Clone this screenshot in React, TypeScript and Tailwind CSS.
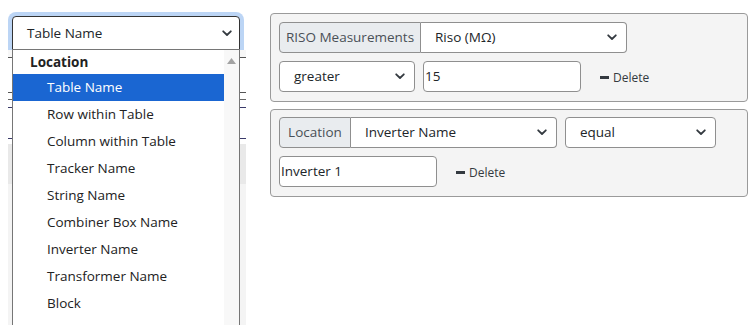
import React from "react";

const Chevron = ({ className = "" }: { className?: string }) => (
  <svg width="10" height="7" viewBox="0 0 10 7" className={className}>
    <path d="M1.2 1.3 L5 5 L8.8 1.3" fill="none" stroke="#343a40" strokeWidth="1.8" strokeLinecap="round" strokeLinejoin="round" />
  </svg>
);

const Select = ({ text, className = "" }: { text: string; className?: string }) => (
  <div className={`flex items-center justify-between bg-white border border-[#8f8f8f] pl-[14px] pr-[9px] text-[13.5px] text-[#212529] ${className}`}>
    <span>{text}</span>
    <Chevron />
  </div>
);

const DeleteBtn = () => (
  <div className="flex items-center gap-[4px] text-[12px] text-[#343a40]">
    <span className="block w-[9px] h-[2.5px] bg-[#343a40]" />
    <span>Delete</span>
  </div>
);

const options = [
  "Table Name",
  "Row within Table",
  "Column within Table",
  "Tracker Name",
  "String Name",
  "Combiner Box Name",
  "Inverter Name",
  "Transformer Name",
  "Block",
];

export default function App() {
  return (
    <div
      className="w-[754px] h-[325px] bg-white overflow-hidden flex"
      style={{ fontFamily: '"Open Sans", "Noto Sans", sans-serif' }}
    >
      {/* left column */}
      <div className="relative w-[246px] shrink-0 pt-[16px]">
        <div className="ml-[12px] w-[228px] h-[34px] rounded-t-[4px] border border-[#333] bg-white flex items-center justify-between pl-[14px] pr-[7px] text-[13.5px] text-[#212529] shadow-[0_0_0_4px_#bcd5f5]">
          <span>Table Name</span>
          <Chevron />
        </div>
        {/* background table behind dropdown */}
        <div className="ml-[8px] w-[238px] flex flex-col bg-[#f7f7f7]">
          <div className="h-[8px] border-b border-[#555]" />
          <div className="h-[35px] border-b border-[#555] bg-white" />
          <div className="h-[7px] border-b border-[#666] bg-white" />
          <div className="h-[8px] border-b border-[#3a3a6a] bg-white" />
          <div className="h-[31px] border-b border-[#3a3a6a] bg-white" />
          <div className="h-[5px] bg-white" />
          <div className="h-[40px] bg-[#e9e9e9]" />
          <div className="h-[150px] bg-[#f4f4f4]" />
        </div>
        {/* open dropdown list */}
        <div className="absolute left-[12px] top-[49px] w-[228px] h-[290px] border border-[#767676] bg-white flex">
          <div className="flex-1 flex flex-col text-[13.5px] text-[#222]">
            <div className="h-[24px] flex items-center pl-[17px] font-bold">Location</div>
            {options.map((o, i) => (
              <div
                key={o}
                className={`h-[27px] flex items-center pl-[34px] ${i === 0 ? "bg-[#1a66d2] text-white" : ""}`}
              >
                {o}
              </div>
            ))}
          </div>
          <div className="w-[15px] bg-[#f8f8f8] flex justify-center pt-[8px]">
            <svg width="9" height="6" viewBox="0 0 9 6">
              <path d="M0 6 L4.5 0 L9 6 Z" fill="#a3a3a3" />
            </svg>
          </div>
        </div>
      </div>

      {/* right column */}
      <div className="ml-[24px] pt-[13px] flex flex-col gap-[7px]">
        <div className="w-[478px] h-[89px] rounded-[4px] border border-[#9a9a9a] bg-[#f4f4f4] pl-[8px] pt-[8px] flex flex-col gap-[8px]">
          <div className="flex h-[31px] w-[348px]">
            <div className="w-[142px] flex items-center justify-center bg-[#e9ecef] border border-[#8f8f8f] rounded-l-[4px] text-[13.5px] text-[#495057]">
              RISO Measurements
            </div>
            <Select text="Riso (MΩ)" className="flex-1 border-l-0 rounded-r-[4px]" />
          </div>
          <div className="flex items-center h-[31px]">
            <Select text="greater" className="w-[136px] h-full rounded-[4px]" />
            <div className="ml-[8px] w-[158px] h-full bg-white border border-[#8f8f8f] rounded-[4px] flex items-center pl-[1px] text-[13.5px] text-[#212529]">
              15
            </div>
            <div className="ml-[19px] mt-[2px]">
              <DeleteBtn />
            </div>
          </div>
        </div>

        <div className="w-[478px] h-[88px] rounded-[4px] border border-[#9a9a9a] bg-[#f4f4f4] pl-[8px] pt-[7px] flex flex-col gap-[8px]">
          <div className="flex h-[31px]">
            <div className="flex w-[278px]">
              <div className="w-[72px] flex items-center justify-center bg-[#e9ecef] border border-[#8f8f8f] rounded-l-[4px] text-[13.5px] text-[#495057]">
                Location
              </div>
              <Select text="Inverter Name" className="flex-1 border-l-0 rounded-r-[4px]" />
            </div>
            <Select text="equal" className="ml-[8px] w-[151px] rounded-[4px]" />
          </div>
          <div className="flex items-center h-[31px]">
            <div className="w-[158px] h-full bg-white border border-[#8f8f8f] rounded-[4px] flex items-center pl-[1px] text-[13.5px] text-[#212529]">
              Inverter 1
            </div>
            <div className="ml-[19px] mt-[2px]">
              <DeleteBtn />
            </div>
          </div>
        </div>
      </div>
    </div>
  );
}
